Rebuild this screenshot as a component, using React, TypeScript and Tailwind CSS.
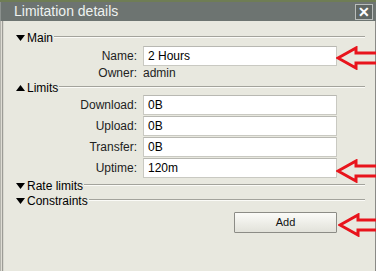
import React from "react";

const font = { fontFamily: '"Liberation Sans", Arial, sans-serif' };

function Tri({ up }: { up?: boolean }) {
  return (
    <svg width="9" height="6" viewBox="0 0 9 6" className="mr-[2px]">
      {up ? <polygon points="0,6 9,6 4.5,0" fill="#000" /> : <polygon points="0,0 9,0 4.5,6" fill="#000" />}
    </svg>
  );
}

function Header({ label, up }: { label: string; up?: boolean }) {
  return (
    <div className="flex h-[12px] items-start">
      <div className="flex h-[12px] items-center">
        <Tri up={up} />
        <span className="text-[12px] leading-[12px] text-black">{label}</span>
      </div>
      <div className="ml-[1px] mt-[4px] h-[2px] flex-1 border-t border-b border-t-[#a3a39c] border-b-[#fbfbf7]" />
    </div>
  );
}

function Field({ label, value }: { label: string; value: string }) {
  return (
    <div className="flex h-[20px] items-center">
      <div className="w-[121px] text-right text-[12px] text-[#222]">{label}</div>
      <div className="ml-[6px] flex h-[20px] w-[194px] items-center border border-[#c9c9c2] border-t-[#b8b8b2] bg-white pl-[4px] text-[12px] text-black">
        {value}
      </div>
    </div>
  );
}

function Arrow({ top, left }: { top: number; left: number }) {
  return (
    <svg
      className="absolute"
      style={{ top, left }}
      width={376 - left}
      height="24"
      viewBox={`0 0 ${376 - left} 24`}
    >
      <polygon
        points="2,12 20,2 20,7 60,7 60,17 20,17 20,22"
        fill="none"
        stroke="#e8141c"
        strokeWidth="3"
        strokeLinejoin="miter"
      />
    </svg>
  );
}

export default function App() {
  return (
    <div className="relative h-[271px] w-[376px] overflow-hidden bg-[#e8e8df]" style={font}>
      <div className="h-[2px] bg-[#6f7d55]" />
      <div className="flex h-[19px] items-center bg-[#6d7471] pl-[14px] pr-[3px] shadow-[inset_1px_0_#8b918e]">
        <span className="flex-1 text-[14px] leading-[19px] text-[#eef2f0]">Limitation details</span>
        <div className="flex h-[16px] w-[18px] items-center justify-center border border-[#b9bdbb] bg-[#5f6663] text-[14px] font-bold leading-none text-white">
          ✕
        </div>
      </div>
      <div className="h-[250px] pl-[16px] pr-[11px] pt-[11px] shadow-[inset_1px_0_#b3b3ac,inset_2px_0_#dedcd4,inset_3px_0_#9c9c96,inset_4px_0_#d8d8d0,inset_-1px_0_#8a8a86]">
        <Header label="Main" />
        <div className="mt-[2px]">
          <Field label="Name:" value="2 Hours" />
        </div>
        <div className="flex h-[14px] items-center text-[12px] leading-[14px] text-[#222]">
          <div className="w-[121px] text-right">Owner:</div>
          <div className="ml-[6px]">admin</div>
        </div>
        <div className="mt-[2px]">
          <Header label="Limits" up />
        </div>
        <div className="mt-[1px] flex flex-col gap-[1px]">
          <Field label="Download:" value="0B" />
          <Field label="Upload:" value="0B" />
          <Field label="Transfer:" value="0B" />
          <Field label="Uptime:" value="120m" />
        </div>
        <div className="mt-[2px]">
          <Header label="Rate limits" />
        </div>
        <div className="mt-[3px]">
          <Header label="Constraints" />
        </div>
        <div className="mt-[5px] pl-[218px]">
          <button className="flex h-[21px] w-[103px] items-center justify-center rounded-[1px] border border-[#8c8c86] bg-gradient-to-b from-[#fbfbf8] to-[#e2e2da] text-[11px] text-[#111]">
            Add
          </button>
        </div>
      </div>
      <Arrow top={46} left={336} />
      <Arrow top={159} left={336} />
      <Arrow top={213} left={338} />
    </div>
  );
}
